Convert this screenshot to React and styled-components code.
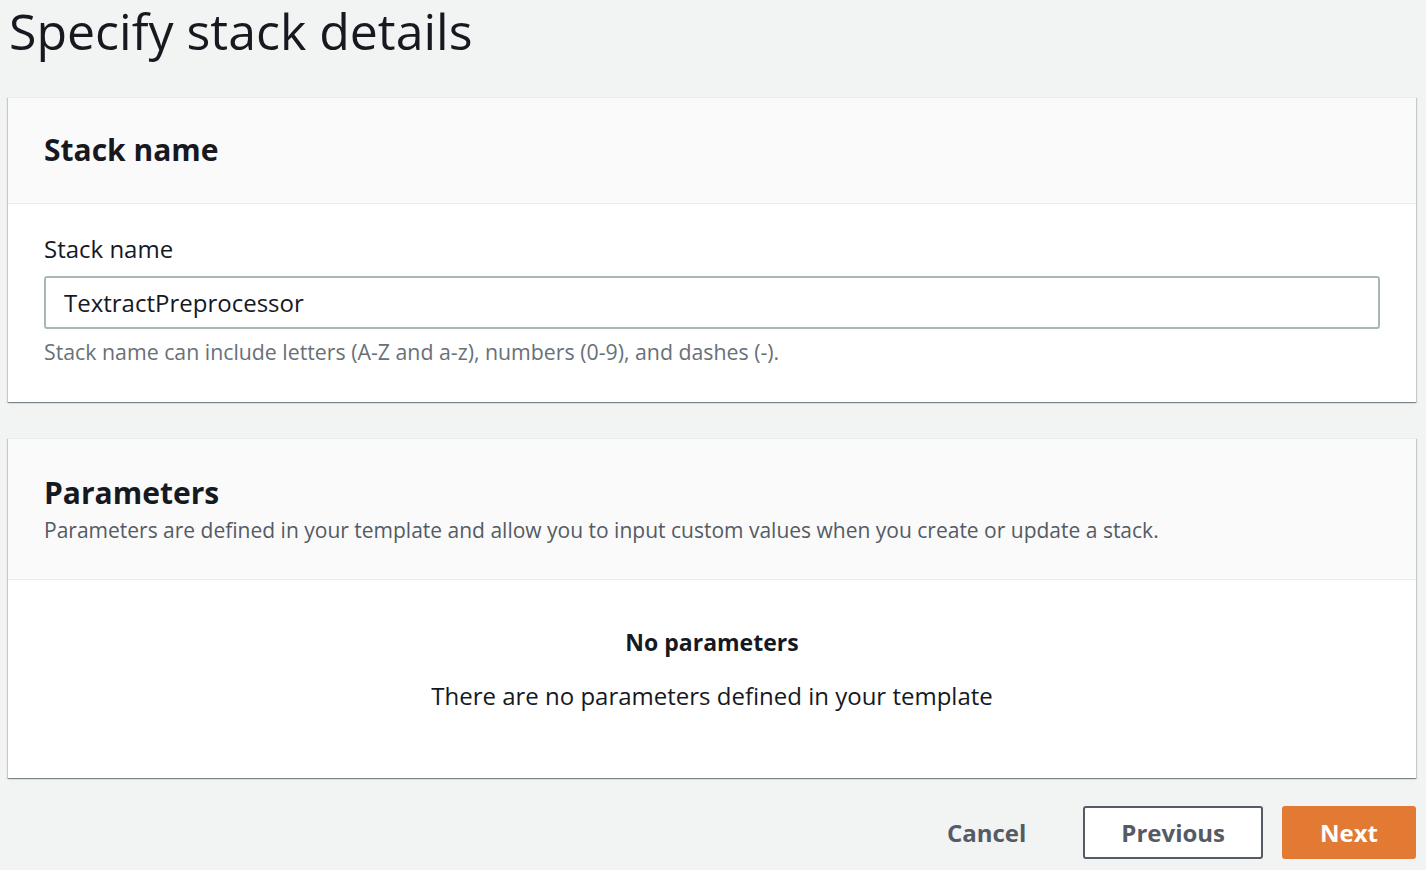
import React from "react";
import styled, { createGlobalStyle } from "styled-components";

const GlobalStyle = createGlobalStyle`
  html, body {
    margin: 0;
    padding: 0;
    background: #f2f3f3;
    font-family: "Open Sans", "Noto Sans", sans-serif;
    color: #16191f;
  }
`;

function App() {
  return (
    <>
      <GlobalStyle />
      <Page>
        <Title>Specify stack details</Title>

        <Card>
          <CardHeader>
            <CardTitle>Stack name</CardTitle>
          </CardHeader>
          <CardBody>
            <Label>Stack name</Label>
            <Input defaultValue="TextractPreprocessor" />
            <Hint>
              Stack name can include letters (A-Z and a-z), numbers (0-9), and
              dashes (-).
            </Hint>
          </CardBody>
        </Card>

        <Card>
          <CardHeader tall>
            <CardTitle>Parameters</CardTitle>
            <Description>
              Parameters are defined in your template and allow you to input
              custom values when you create or update a stack.
            </Description>
          </CardHeader>
          <EmptyBody>
            <EmptyTitle>No parameters</EmptyTitle>
            <EmptyText>There are no parameters defined in your template</EmptyText>
          </EmptyBody>
        </Card>

        <Actions>
          <LinkButton>Cancel</LinkButton>
          <Button>Previous</Button>
          <Button primary>Next</Button>
        </Actions>
      </Page>
    </>
  );
}

export default App;

const Page = styled.div`
  width: 1426px;
  height: 870px;
  box-sizing: border-box;
  padding: 0 10px 0 8px;
  overflow: hidden;
  display: flex;
  flex-direction: column;
`;

const Title = styled.h1`
  margin: 0 0 0 1px;
  height: 97px;
  font-size: 50px;
  line-height: 62px;
  font-weight: 400;
  color: #16191f;
  flex-shrink: 0;
`;

const Card = styled.section`
  background: #fff;
  border-top: 1px solid #eaeded;
  box-shadow: 0 1px 1px 0 rgba(0, 28, 36, 0.3),
    1px 1px 1px 0 rgba(0, 28, 36, 0.15), -1px 1px 1px 0 rgba(0, 28, 36, 0.15);
  margin-bottom: 36px;
  flex-shrink: 0;

  & + & {
    margin-bottom: 28px;
  }
`;

const CardHeader = styled.header`
  background: #fafafa;
  border-bottom: 1px solid #eaeded;
  padding: ${(p) => (p.tall ? "34px 36px 35px" : "32px 36px 33px")};
`;

const CardTitle = styled.h2`
  margin: 0;
  font-size: 30px;
  line-height: 40px;
  font-weight: 700;
  color: #16191f;
`;

const Description = styled.p`
  margin: 3px 0 0;
  font-size: 21px;
  line-height: 28px;
  color: #545b64;
`;

const CardBody = styled.div`
  padding: 30px 36px 37px;
  display: flex;
  flex-direction: column;
`;

const Label = styled.label`
  font-size: 24px;
  line-height: 30px;
  color: #16191f;
  margin-bottom: 12px;
`;

const Input = styled.input`
  box-sizing: border-box;
  width: 100%;
  height: 53px;
  border: 2px solid #aab7b8;
  border-radius: 3px;
  padding: 0 18px;
  font-family: inherit;
  font-size: 24px;
  color: #16191f;
  outline: none;
  margin-bottom: 10px;
`;

const Hint = styled.p`
  margin: 0;
  font-size: 21.3px;
  line-height: 26px;
  color: #687078;
`;

const EmptyBody = styled.div`
  padding: 47px 36px 66px;
  text-align: center;
`;

const EmptyTitle = styled.h3`
  margin: 0 0 23px;
  font-size: 23px;
  line-height: 30px;
  font-weight: 700;
  color: #16191f;
`;

const EmptyText = styled.p`
  margin: 0;
  font-size: 24px;
  line-height: 32px;
  color: #16191f;
`;

const Actions = styled.div`
  display: flex;
  justify-content: flex-end;
  align-items: center;
  gap: 19px;
  flex-shrink: 0;
`;

const LinkButton = styled.button`
  background: none;
  border: none;
  font-family: inherit;
  font-size: 24px;
  font-weight: 700;
  color: #545b64;
  padding: 0 38px 0 0;
  height: 53px;
`;

const Button = styled.button`
  box-sizing: border-box;
  height: 53px;
  padding: 0 36px;
  border-radius: 3px;
  font-family: inherit;
  font-size: 24px;
  font-weight: 700;
  border: 2px solid ${(p) => (p.primary ? "#e27a34" : "#545b64")};
  background: ${(p) => (p.primary ? "#e27a34" : "#fff")};
  color: ${(p) => (p.primary ? "#fff" : "#545b64")};
`;
